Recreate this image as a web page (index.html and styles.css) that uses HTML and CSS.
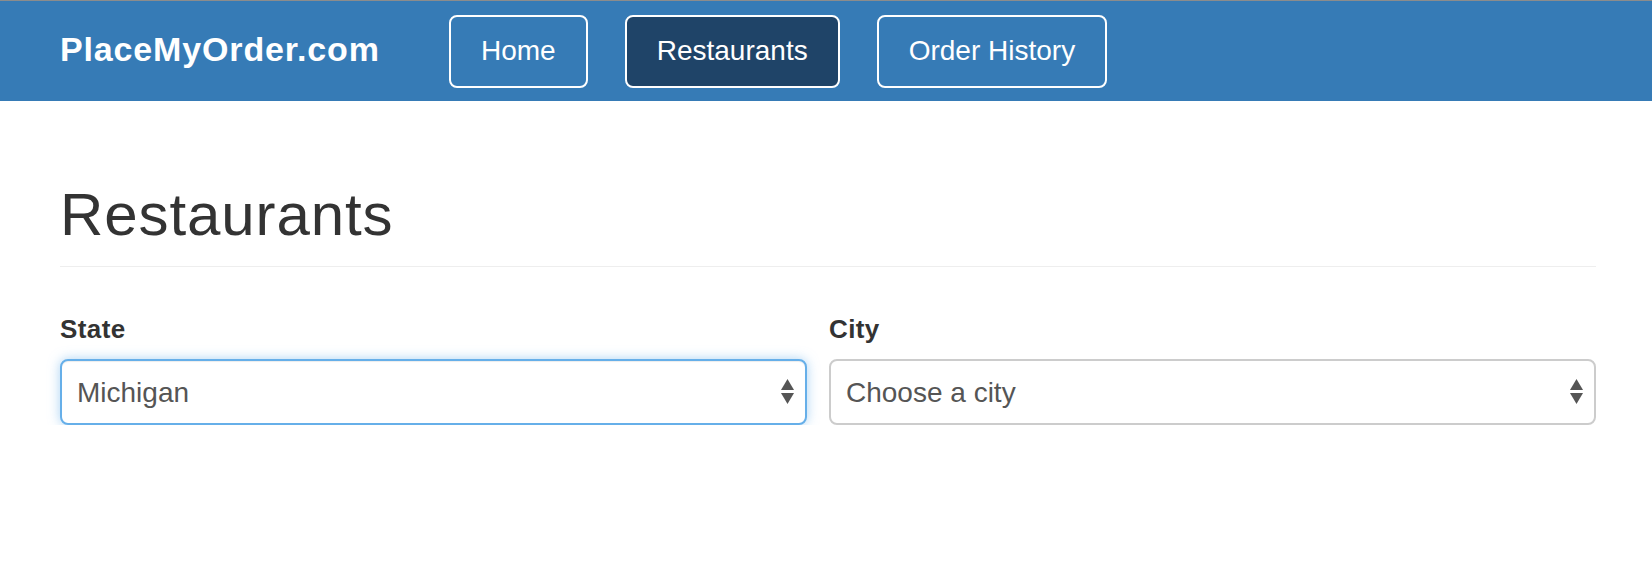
FILE: index.html
```html
<!DOCTYPE html>
<html lang="en">
<head>
<meta charset="utf-8">
<title>PlaceMyOrder.com</title>
<link rel="stylesheet" href="styles.css">
</head>
<body>
<nav class="navbar">
  <a class="brand" href="#">PlaceMyOrder.com</a>
  <ul class="nav-links">
    <li><a class="nav-btn" href="#">Home</a></li>
    <li><a class="nav-btn active" href="#">Restaurants</a></li>
    <li><a class="nav-btn" href="#">Order History</a></li>
  </ul>
</nav>
<main class="container">
  <div class="page-header">
    <h1>Restaurants</h1>
  </div>
  <form class="filters">
    <div class="form-group">
      <label for="state">State</label>
      <div class="select-wrap">
        <select id="state" class="form-control focused">
          <option>Michigan</option>
        </select>
        <svg class="arrows" width="13" height="25" viewBox="0 0 13 25"><polygon points="6.5,0 13,11 0,11"/><polygon points="0,14 13,14 6.5,25"/></svg>
      </div>
    </div>
    <div class="form-group">
      <label for="city">City</label>
      <div class="select-wrap">
        <select id="city" class="form-control">
          <option>Choose a city</option>
        </select>
        <svg class="arrows" width="13" height="25" viewBox="0 0 13 25"><polygon points="6.5,0 13,11 0,11"/><polygon points="0,14 13,14 6.5,25"/></svg>
      </div>
    </div>
  </form>
</main>
</body>
</html>
```
FILE: styles.css
```css
* { box-sizing: border-box; }

html, body {
  margin: 0;
  padding: 0;
  background: #fff;
}

body {
  font-family: "Liberation Sans", Arial, sans-serif;
  color: #333;
  border-top: 1px solid #8c8c8c;
}

.navbar {
  height: 100px;
  background: #367bb6;
  display: flex;
  align-items: center;
  padding-left: 60px;
}

.brand {
  width: 389px;
  color: #fff;
  text-decoration: none;
  font-weight: bold;
  font-size: 34px;
  letter-spacing: 0.85px;
  margin-top: -3px;
}

.nav-links {
  list-style: none;
  margin: 0;
  padding: 0;
  display: flex;
  gap: 37px;
}

.nav-btn {
  display: flex;
  align-items: center;
  height: 73px;
  padding: 0 30px;
  border: 2px solid #fff;
  border-radius: 8px;
  color: #fff;
  text-decoration: none;
  font-size: 28px;
}

.nav-btn.active {
  background: #1f4468;
}

.container {
  padding: 0 56px 0 60px;
}

.page-header {
  margin-top: 81px;
  padding-bottom: 19px;
  border-bottom: 1px solid #eeeeee;
}

.page-header h1 {
  margin: 0;
  font-size: 60px;
  line-height: 65px;
  font-weight: normal;
  letter-spacing: 0.9px;
  color: #333;
}

.filters {
  display: grid;
  grid-template-columns: 747px 1fr;
  column-gap: 22px;
  margin-top: 47px;
}

.form-group label {
  display: block;
  font-size: 26px;
  line-height: 30px;
  font-weight: bold;
  letter-spacing: 0.4px;
  color: #333;
  margin-bottom: 15px;
}

.select-wrap {
  position: relative;
}

.form-control {
  display: block;
  width: 100%;
  height: 66px;
  padding: 0 40px 0 15px;
  font-family: "Liberation Sans", Arial, sans-serif;
  font-size: 28px;
  color: #555;
  background: #fff;
  border: 2px solid #cccccc;
  border-radius: 8px;
  -webkit-appearance: none;
  appearance: none;
  outline: none;
}

.form-control.focused {
  border-color: #66afe9;
  box-shadow: inset 0 1px 1px rgba(0,0,0,.075), 0 0 12px rgba(102,175,233,.55);
}

.arrows {
  position: absolute;
  right: 13px;
  top: 20px;
  fill: #555;
  pointer-events: none;
}
```
